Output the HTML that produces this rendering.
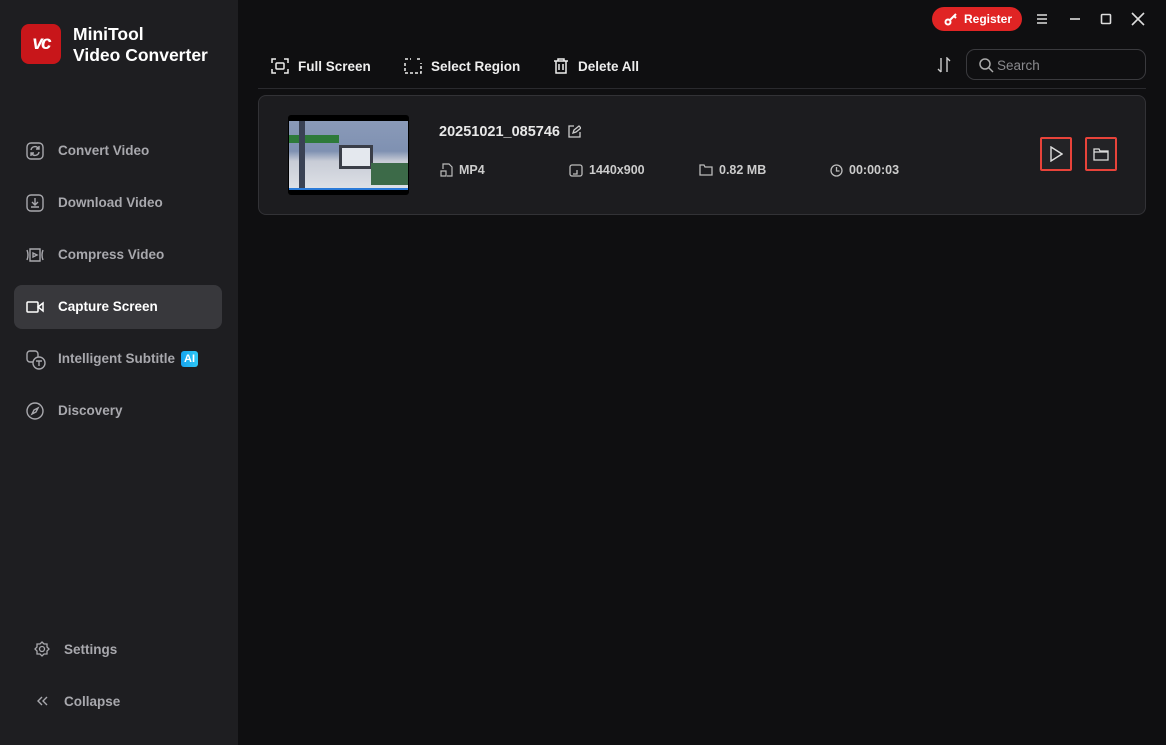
<!DOCTYPE html><html><head><meta charset="utf-8"><style>
*{margin:0;padding:0;box-sizing:border-box}
body{width:1166px;height:745px;background:#0f0f11;font-family:"Liberation Sans",sans-serif;color:#e8e8e8;position:relative;overflow:hidden}
.side{position:absolute;left:0;top:0;width:238px;height:745px;background:#1e1e21}
.logo{position:absolute;left:21px;top:24px;width:40px;height:40px;border-radius:8px;background:#c8161a;color:#fff;font-weight:bold;font-style:italic;font-size:19px;text-align:center;line-height:40px;letter-spacing:-2px}
.brand{position:absolute;left:73px;top:24px;font-size:17.5px;font-weight:bold;line-height:21px;color:#fff}
.nav{position:absolute;left:14px;width:208px;height:44px;border-radius:8px;font-size:13.5px;font-weight:bold;color:#a8a8ad;line-height:44px;padding-left:44px}
.nav svg{position:absolute;left:12px;top:13px}
.nav.act{background:#38383c;color:#fff}
.ai{display:inline-block;background:linear-gradient(90deg,#16a4f0,#2fc8f5);color:#fff;font-size:11px;padding:0 3px;border-radius:3px;line-height:16px;margin-left:6px;vertical-align:1px}
.tb{position:absolute;top:58px;font-size:13.5px;font-weight:bold;color:#eee;display:flex;align-items:center;gap:9px}
.line{position:absolute;left:258px;right:20px;top:88px;height:1px;background:#2a2a2e}
.search{position:absolute;left:966px;top:49px;width:180px;height:31px;border:1px solid #3a3a3e;border-radius:9px;color:#8a8a8e;font-size:13.5px;line-height:32px;padding-left:30px}
.reg{position:absolute;left:932px;top:7px;width:90px;height:24px;border-radius:12px;background:#e02424;color:#fff;font-size:12px;font-weight:bold;line-height:24px;padding-left:32px}
.card{position:absolute;left:258px;top:95px;width:888px;height:120px;background:#1c1c1f;border:1px solid #323236;border-radius:8px}
.meta{position:absolute;top:67px;font-size:12.5px;font-weight:bold;color:#ccc;display:flex;align-items:center;gap:6px}
.btn{position:absolute;top:41px;width:32px;height:34px;border:2px solid #e8433a;border-radius:2px;background:#232326;display:flex;align-items:center;justify-content:center}
</style></head><body>
<div class="side">
<div class="logo">vc</div>
<div class="brand">MiniTool<br>Video Converter</div>
<div class="nav" style="top:129px"><svg width="18" height="18" viewBox="0 0 18 18" fill="none" stroke="#a8a8ad" stroke-width="1.4"><rect x="1" y="1" width="16" height="16" rx="4"/><path d="M5 8a4 4 0 0 1 7-2l1 1M13 10a4 4 0 0 1-7 2l-1-1M13 4v3h-3M5 14v-3h3"/></svg>Convert Video</div>
<div class="nav" style="top:181px"><svg width="18" height="18" viewBox="0 0 18 18" fill="none" stroke="#a8a8ad" stroke-width="1.4"><rect x="1" y="1" width="16" height="16" rx="4"/><path d="M9 4v7M6 8l3 3 3-3M5 13h8"/></svg>Download Video</div>
<div class="nav" style="top:233px"><svg width="18" height="18" viewBox="0 0 18 18" fill="none" stroke="#a8a8ad" stroke-width="1.4"><path d="M1 4q2 5 0 10M17 4q-2 5 0 10M4 3h10v12H4z"/><path d="M7 7l4 2-4 2z"/></svg>Compress Video</div>
<div class="nav act" style="top:285px"><svg width="18" height="18" viewBox="0 0 18 18" fill="none" stroke="#fff" stroke-width="1.5"><rect x="1" y="4" width="11" height="10" rx="1"/><path d="M12 9l5-4v8z"/></svg>Capture Screen</div>
<div class="nav" style="top:337px"><svg width="20" height="20" viewBox="0 0 20 20" fill="none" stroke="#a8a8ad" stroke-width="1.4"><rect x="1" y="1" width="11" height="11" rx="3"/><circle cx="13" cy="13" r="6" fill="#1e1e21"/><path d="M10 11h6M13 11v5"/></svg>Intelligent Subtitle<span class="ai">AI</span></div>
<div class="nav" style="top:389px"><svg width="18" height="18" viewBox="0 0 18 18" fill="none" stroke="#a8a8ad" stroke-width="1.4"><circle cx="9" cy="9" r="8"/><path d="M12 6l-2 4-4 2 2-4z"/></svg>Discovery</div>
<div class="nav" style="top:628px;padding-left:50px"><svg style="left:20px" width="16" height="16" viewBox="0 0 16 16" fill="none" stroke="#a8a8ad" stroke-width="1.3"><circle cx="8" cy="8" r="2.5"/><path d="M8 1l2 2h3v3l2 2-2 2v3h-3l-2 2-2-2H3v-3L1 8l2-2V3h3z"/></svg>Settings</div>
<div class="nav" style="top:680px;padding-left:50px"><svg style="left:20px" width="16" height="16" viewBox="0 0 16 16" fill="none" stroke="#a8a8ad" stroke-width="1.4"><path d="M8 4L4 8l4 4M13 4L9 8l4 4"/></svg>Collapse</div>
</div>
<div class="reg"><svg style="position:absolute;left:12px;top:6px" width="14" height="13" viewBox="0 0 14 13" fill="none" stroke="#fff" stroke-width="2"><circle cx="4" cy="9" r="2.5"/><path d="M6 7l6-6M10 3l2 2"/></svg>Register</div>
<svg style="position:absolute;left:1036px;top:13px" width="12" height="12" stroke="#ddd" stroke-width="1.6"><path d="M1 2h10M1 6h10M1 10h10"/></svg>
<svg style="position:absolute;left:1069px;top:13px" width="12" height="12" stroke="#ddd" stroke-width="1.6"><path d="M1 6h10"/></svg>
<svg style="position:absolute;left:1100px;top:13px" width="12" height="12" fill="none" stroke="#ddd" stroke-width="1.6"><rect x="1.5" y="1.5" width="9" height="9" rx="1"/></svg>
<svg style="position:absolute;left:1131px;top:12px" width="14" height="14" stroke="#ddd" stroke-width="1.6"><path d="M1 1l12 12M13 1L1 13"/></svg>
<div class="tb" style="left:271px"><svg width="18" height="16" viewBox="0 0 18 16" fill="none" stroke="#eee" stroke-width="1.5"><path d="M1 5V1h4M13 1h4v4M17 11v4h-4M5 15H1v-4"/><rect x="5" y="5" width="8" height="6" rx="1"/></svg>Full Screen</div>
<div class="tb" style="left:404px"><svg width="18" height="16" viewBox="0 0 18 16" fill="none" stroke="#eee" stroke-width="1.5"><path d="M1 5v10h16V5M13 1h4M1 1h6" stroke-dasharray="3 2"/></svg>Select Region</div>
<div class="tb" style="left:553px"><svg width="16" height="16" viewBox="0 0 16 16" fill="none" stroke="#eee" stroke-width="1.5"><path d="M1 3h14M5 3V1h6v2M3 3v12h10V3M6 6v6M10 6v6"/></svg>Delete All</div>
<svg style="position:absolute;left:937px;top:57px" width="14" height="16" fill="none" stroke="#ccc" stroke-width="1.4"><path d="M4 1v14M1 12l3 3M10 15V1l3 3"/></svg>
<div class="search"><svg style="position:absolute;left:12px;top:8px" width="15" height="15" fill="none" stroke="#aaa" stroke-width="1.5"><circle cx="6" cy="6" r="5"/><path d="M10 10l4 4"/></svg>Search</div>
<div class="line"></div>
<div class="card">
<div style="position:absolute;left:29px;top:19px;width:121px;height:80px;background:#000;border-radius:3px;overflow:hidden">
<div style="position:absolute;left:1px;top:6px;width:119px;height:67px;background:linear-gradient(180deg,#8a9ab8 0%,#7f91b2 45%,#c8ccd6 60%,#dde0e6 100%)">
<div style="position:absolute;left:0;top:14px;width:50px;height:8px;background:#2e7a3a"></div>
<div style="position:absolute;left:10px;top:0;width:6px;height:67px;background:#3a4254"></div>
<div style="position:absolute;left:50px;top:24px;width:34px;height:24px;background:#e4e8ee;border:3px solid #3a3e48"></div>
<div style="position:absolute;left:82px;top:42px;width:37px;height:22px;background:#3c6a48"></div>
</div><div style="position:absolute;left:1px;top:73px;width:119px;height:2px;background:#2a7ad8"></div></div>
<div style="position:absolute;left:180px;top:28px;font-size:14.5px;font-weight:bold;color:#e8e8e8">20251021_085746</div>
<svg style="position:absolute;left:309px;top:29px" width="13" height="13" fill="none" stroke="#ccc" stroke-width="1.3"><path d="M6 1H1v11h11V7M5 8l1-3 5-4 2 2-5 4z"/></svg>
<div class="meta" style="left:181px"><svg width="13" height="14" fill="none" stroke="#bbb" stroke-width="1.2"><path d="M3 6V1h6l3 3v9H7M1 8h5v5H1z"/></svg>MP4</div>
<div class="meta" style="left:310px"><svg width="14" height="13" fill="none" stroke="#bbb" stroke-width="1.3"><rect x="1" y="1" width="12" height="11" rx="2"/><path d="M4 10h4V6"/></svg>1440x900</div>
<div class="meta" style="left:440px"><svg width="14" height="12" fill="none" stroke="#bbb" stroke-width="1.3"><path d="M1 1h4l1 2h7v8H1z"/></svg>0.82 MB</div>
<div class="meta" style="left:571px"><svg width="13" height="13" fill="none" stroke="#bbb" stroke-width="1.3"><circle cx="6.5" cy="6.5" r="5.5"/><path d="M6.5 3v4h3"/></svg>00:00:03</div>
<div class="btn" style="left:781px"><svg width="14" height="16" fill="none" stroke="#ddd" stroke-width="1.4"><path d="M2 1l11 7-11 7z"/></svg></div>
<div class="btn" style="left:826px"><svg width="16" height="14" fill="none" stroke="#ddd" stroke-width="1.3"><path d="M1 2h5l1 2h8v9H1zM1 5h14"/></svg></div>
</div>
</body></html>
